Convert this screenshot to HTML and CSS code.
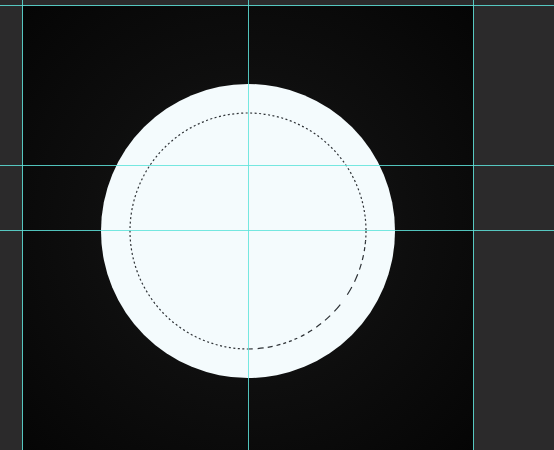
FILE: index.html
```html
<!DOCTYPE html>
<html>
<head>
<meta charset="utf-8">
<link rel="stylesheet" href="styles.css">
</head>
<body>
<div class="workspace">
  <div class="canvas">
    <div class="disc">
      <svg class="ants" width="294" height="294" viewBox="0 0 294 294">
        <circle cx="147" cy="147" r="118" fill="none" stroke="#2e3236" stroke-width="1.2" stroke-dasharray="2 2.5"/>
        <path d="M 264.5 157.3 A 118 118 0 0 1 147 265" fill="none" stroke="#f4fbfd" stroke-width="3"/>
        <path d="M 264.5 157.3 A 118 118 0 0 1 147 265" fill="none" stroke="#2e3236" stroke-width="1.2" stroke-dasharray="3 3 4 4 5 4 6 5 8 6 9 12 9 6 7 5 6 5 5 4 4 4 3 3 3 3"/>
      </svg>
    </div>
  </div>
  <div class="guide v g1"></div>
  <div class="guide v g2"></div>
  <div class="guide v g3"></div>
  <div class="guide h g4"></div>
  <div class="guide h g5"></div>
  <div class="guide h g6"></div>
</div>
</body>
</html>
```
FILE: styles.css
```css
html, body {
  margin: 0;
  padding: 0;
  width: 554px;
  height: 450px;
  overflow: hidden;
  background: #2b2a2b;
}
.workspace {
  position: relative;
  width: 554px;
  height: 450px;
  padding: 6px 0 0 23px;
  box-sizing: border-box;
}
.canvas {
  width: 450px;
  height: 448px;
  background: radial-gradient(circle at 50% 50%, #1a1b1c 0%, #0e0e0e 50%, #050505 100%);
  display: flex;
  justify-content: center;
  padding-top: 78px;
  box-sizing: border-box;
}
.disc {
  width: 294px;
  height: 294px;
  border-radius: 50%;
  background: #f4fbfd;
}
.ants {
  display: block;
}
.guide {
  position: absolute;
  background: #5ee3da;
  opacity: 0.85;
}
.v { top: 0; bottom: 0; width: 1px; }
.h { left: 0; right: 0; height: 1px; }
.g1 { left: 22px; }
.g2 { left: 248px; }
.g3 { left: 473px; }
.g4 { top: 5px; }
.g5 { top: 165px; }
.g6 { top: 230px; }
```
